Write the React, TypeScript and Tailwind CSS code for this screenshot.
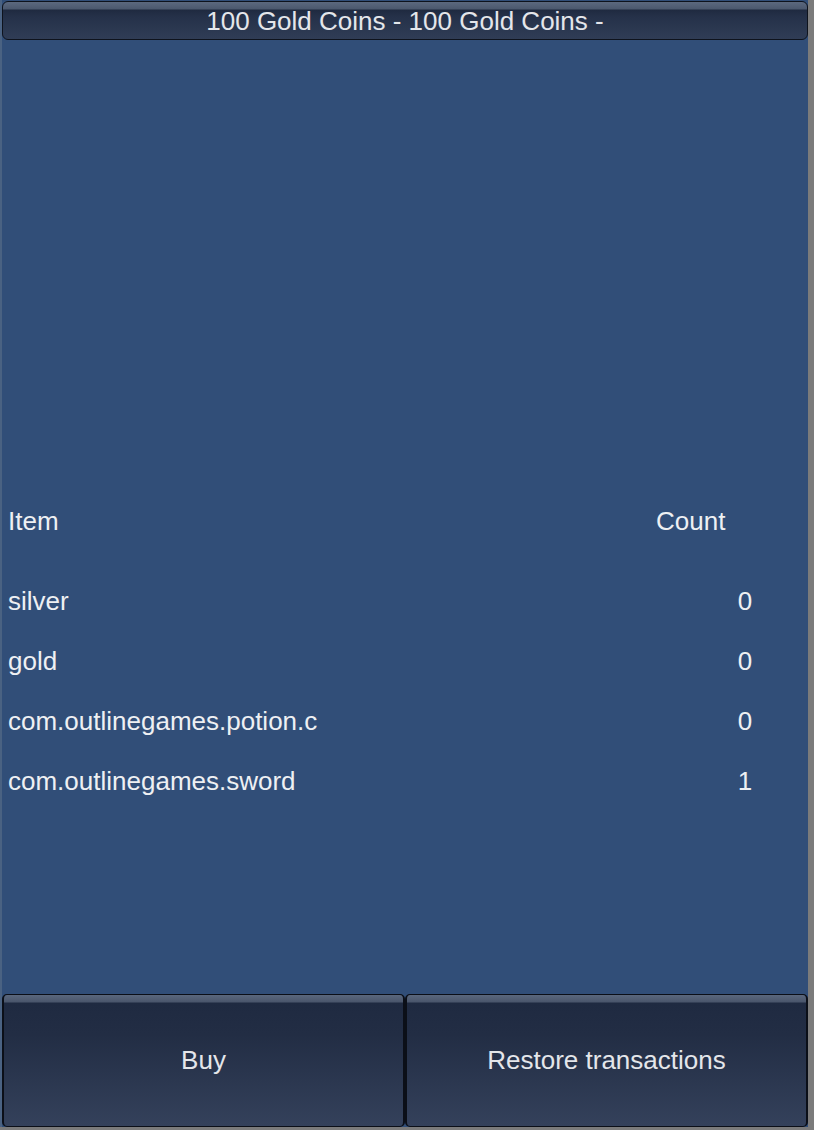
import React from 'react';

const items = [
  { name: 'silver', count: 0 },
  { name: 'gold', count: 0 },
  { name: 'com.outlinegames.potion.c', count: 0 },
  { name: 'com.outlinegames.sword', count: 1 },
];

const Button: React.FC<{ label: string }> = ({ label }) => (
  <button className="flex-1 flex items-center justify-center rounded-[5px] border-x-2 border-t border-b border-[#0b0f18] bg-[linear-gradient(to_bottom,#5a677d_0px,#4a566c_7px,#1f2a41_8px,#222d44_30%,#34415b_100%)] text-[26px] text-[#e4e6ea]">
    {label}
  </button>
);

export default function App() {
  return (
    <div className="w-[814px] h-[1130px] bg-[#7b7b7b] flex flex-col font-['Liberation_Sans',Arial,sans-serif]">
      <div className="flex-1 flex flex-col bg-[#314e78] mr-[6px] mb-[3px] pt-px border-l-2 border-[#4a6282]">
        {/* title bar */}
        <div className="h-[39px] flex items-center justify-center rounded-[6px] border border-[#0e131d] bg-[linear-gradient(to_bottom,#5c697f_0px,#4b586e_7px,#1f2a40_8px,#253149_40%,#303d56_100%)] text-[26px] text-[#e4e6ea] leading-none">
          100 Gold Coins - 100 Gold Coins -
        </div>

        {/* inventory table */}
        <div className="mt-[451px] text-[26px] text-[#eef0f3]">
          <div className="h-[60px] flex items-center">
            <div className="w-[654px] pl-[6px]">Item</div>
            <div>Count</div>
          </div>
          <div className="mt-[20px]">
            {items.map((item) => (
              <div key={item.name} className="h-[60px] flex items-center">
                <div className="w-[654px] pl-[6px]">{item.name}</div>
                <div className="w-[24px] ml-[77px] text-center">{item.count}</div>
              </div>
            ))}
          </div>
        </div>

        {/* actions */}
        <div className="mt-auto h-[133px] flex">
          <Button label="Buy" />
          <Button label="Restore transactions" />
        </div>
      </div>
    </div>
  );
}
